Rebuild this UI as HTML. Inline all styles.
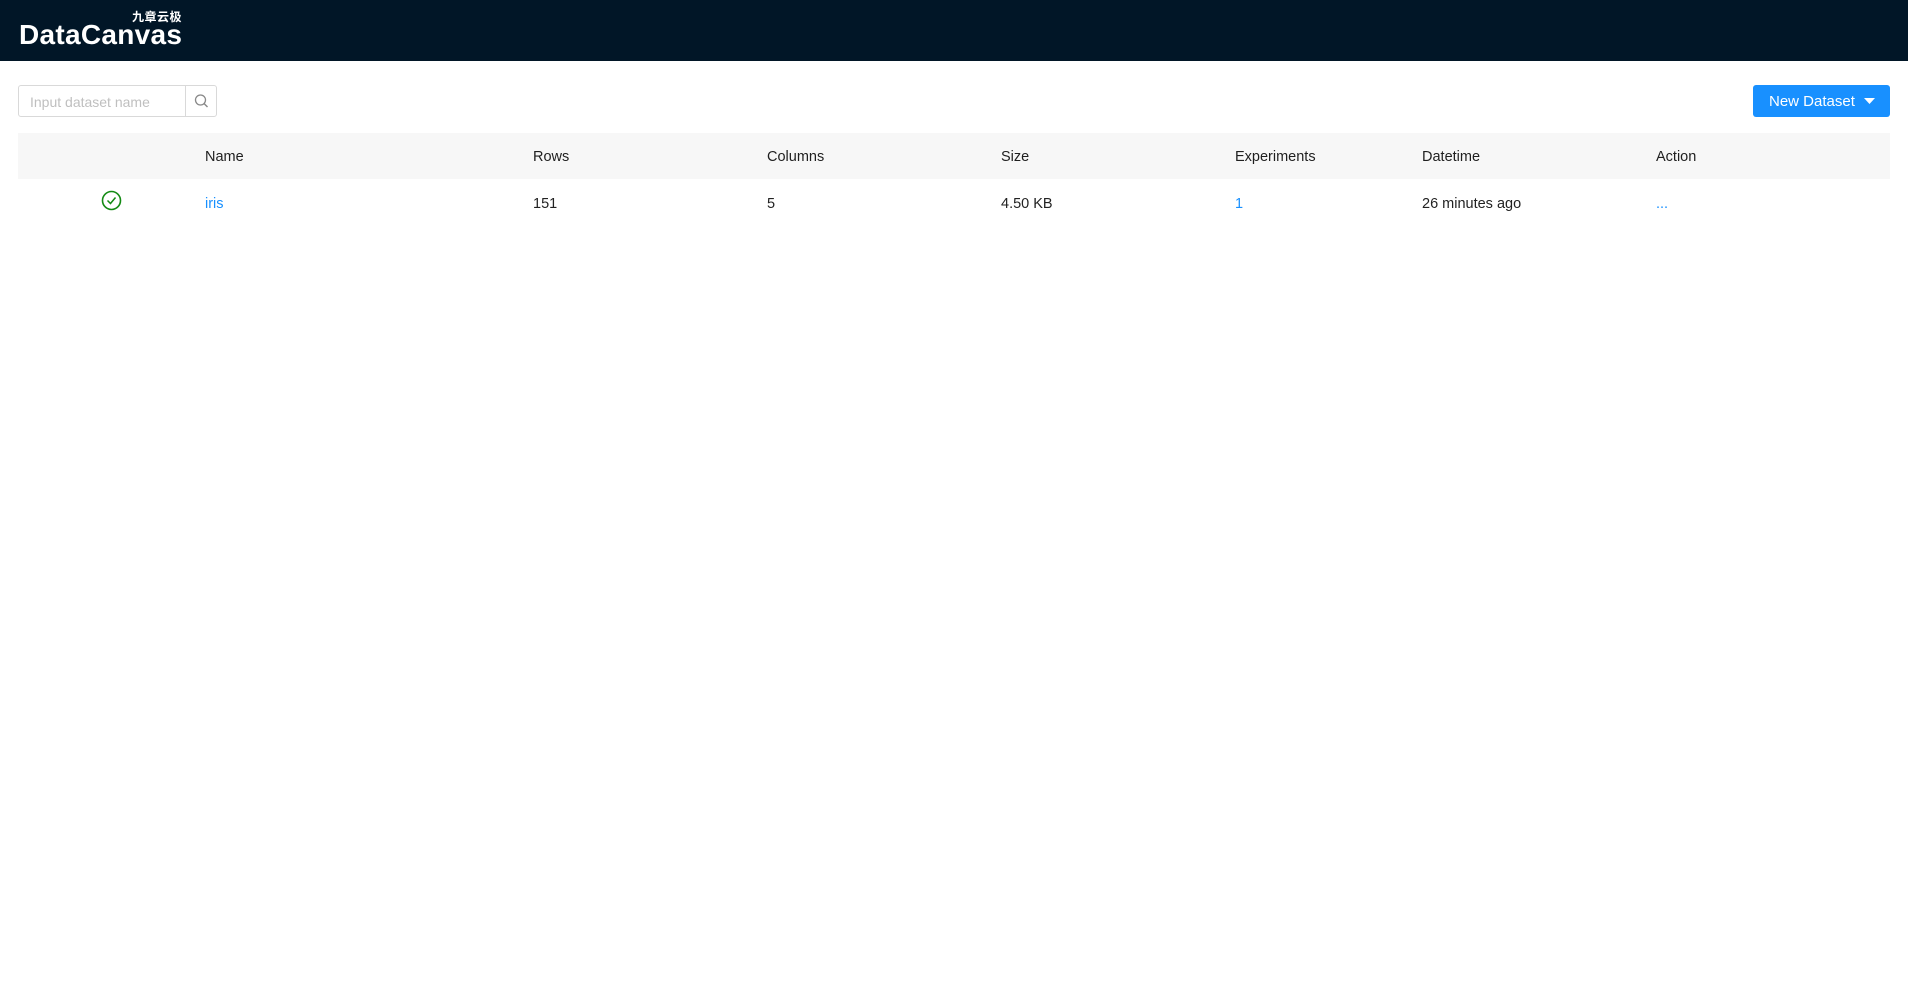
<!DOCTYPE html>
<html><head><meta charset="utf-8"><style>
*{margin:0;padding:0;box-sizing:border-box}
body{width:1908px;height:994px;background:#fff;font-family:"Liberation Sans","Noto Sans CJK SC",sans-serif;color:#222;position:relative;overflow:hidden}
.hdr{position:absolute;left:0;top:0;width:1908px;height:61px;background:#011627}
.logo{position:absolute;left:19px;top:19px;color:#fff;font-weight:bold;font-size:28px;letter-spacing:0.3px}
.cn{position:absolute;left:132px;top:8px;color:#fff;font-size:12px;font-weight:bold;letter-spacing:0.5px}
.search{position:absolute;left:18px;top:85px;width:199px;height:32px;border:1px solid #d9d9d9;border-radius:3px}
.search span{position:absolute;left:11px;top:8px;font-size:14px;color:#bfbfbf}
.search .btn{position:absolute;right:0;top:0;width:31px;height:30px;border-left:1px solid #d9d9d9}
.nb{position:absolute;left:1753px;top:85px;width:137px;height:32px;background:#1890ff;border-radius:3px;color:#fff;font-size:15px}
.nb span{position:absolute;left:16px;top:8px}
.th{position:absolute;left:18px;top:133px;width:1872px;height:46px;background:#f7f7f7}
.t{position:absolute;font-size:14.5px;white-space:nowrap}
.h{top:149px;color:#1f1f1f}
.r{top:196px}
.a{color:#1890ff}
</style></head><body>
<div class="hdr"><div class="cn">九章云极</div><div class="logo">DataCanvas</div></div>
<div class="search"><span>Input dataset name</span><div class="btn"><svg width="31" height="30" viewBox="0 0 31 30"><circle cx="14.5" cy="14" r="5" fill="none" stroke="#888" stroke-width="1.3"/><line x1="18" y1="17.5" x2="21.5" y2="21" stroke="#888" stroke-width="1.4"/></svg></div></div>
<div class="nb"><span>New Dataset</span><svg style="position:absolute;left:111px;top:13px" width="11" height="7" viewBox="0 0 11 7"><path d="M0 0H11L5.5 6Z" fill="#fff"/></svg></div>
<div class="th"></div>
<div class="t h" style="left:205px">Name</div>
<div class="t h" style="left:533px">Rows</div>
<div class="t h" style="left:767px">Columns</div>
<div class="t h" style="left:1001px">Size</div>
<div class="t h" style="left:1235px">Experiments</div>
<div class="t h" style="left:1422px">Datetime</div>
<div class="t h" style="left:1656px">Action</div>
<svg style="position:absolute;left:101px;top:190px" width="21" height="21" viewBox="0 0 21 21"><circle cx="10.5" cy="10.5" r="9" fill="none" stroke="#138a13" stroke-width="1.6"/><path d="M6.5 10.5l3 3 5-6" fill="none" stroke="#138a13" stroke-width="1.5"/></svg>
<div class="t r a" style="left:205px">iris</div>
<div class="t r" style="left:533px">151</div>
<div class="t r" style="left:767px">5</div>
<div class="t r" style="left:1001px">4.50 KB</div>
<div class="t r a" style="left:1235px">1</div>
<div class="t r" style="left:1422px">26 minutes ago</div>
<div class="t r a" style="left:1656px">...</div>
</body></html>
